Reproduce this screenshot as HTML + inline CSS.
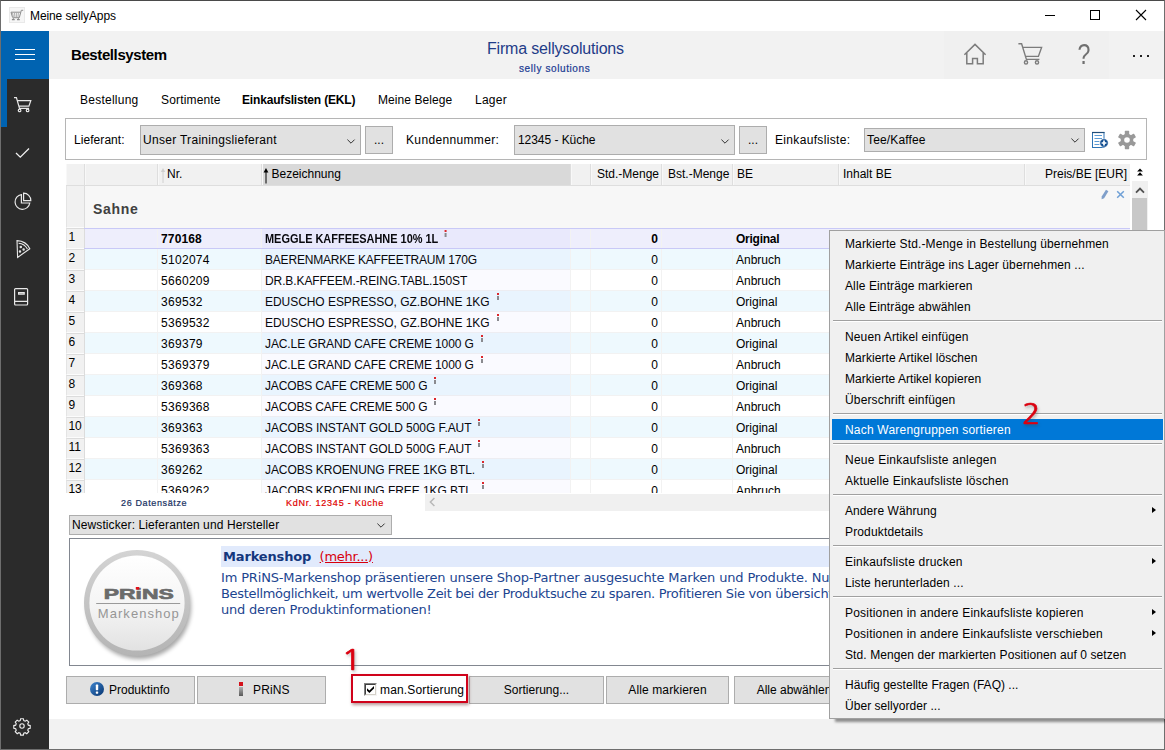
<!DOCTYPE html>
<html lang="de">
<head>
<meta charset="utf-8">
<title>Meine sellyApps</title>
<style>
*{box-sizing:border-box;margin:0;padding:0}
html,body{width:1165px;height:750px;overflow:hidden;background:#fff}
body{position:relative;font-family:"Liberation Sans",Arial,sans-serif;font-size:12px;color:#000}
.abs{position:absolute}
#win{position:absolute;left:0;top:0;width:1165px;height:750px;border:1px solid #6e6e6e;border-top-color:#4a4a4a;overflow:hidden}
/* title bar */
#title{position:absolute;left:1px;top:1px;width:1163px;height:30px;background:#fff}
#title .txt{position:absolute;left:29px;top:8px;font-size:12px;letter-spacing:-0.1px}
/* sidebar */
#side{position:absolute;left:1px;top:31px;width:48px;height:718px;background:#2b2b2b}
#side .top{position:absolute;left:0;top:0;width:48px;height:48px;background:#0063b1}
#side .act{position:absolute;left:0;top:48px;width:6px;height:48px;background:#0063b1}
/* header */
#head{position:absolute;left:49px;top:31px;width:1115px;height:48px;background:#f2f2f2}
#head .t1{position:absolute;left:22px;top:15px;font-size:15px;font-weight:bold;letter-spacing:-0.4px}
#head .firm{position:absolute;left:438px;top:9px;font-size:16px;color:#1f3c88;letter-spacing:-0.18px;white-space:nowrap}
#head .sub{position:absolute;left:470px;top:32px;font-size:10px;color:#1a3a92;-webkit-text-stroke:.2px #1a3a92;letter-spacing:0.6px;white-space:nowrap}
/* tabs */
.tab{position:absolute;top:93px;font-size:12px;white-space:nowrap;letter-spacing:0.25px}
/* filter */
#filter{position:absolute;left:65px;top:118px;width:1082px;height:42px;border:1px solid #b5b5b5;background:#fff}
.combo{position:absolute;background:#e1e1e1;border:1px solid #adadad;font-size:12px;white-space:nowrap}
.combo span{position:absolute;left:2px;letter-spacing:0.3px}
.lbl{position:absolute;font-size:12px;white-space:nowrap;letter-spacing:0.15px}
.btn{position:absolute;background:#e1e1e1;border:1px solid #adadad;font-size:12px;text-align:center;white-space:nowrap}

/* table */
#grid{position:absolute;left:66px;top:164px;width:1082px;height:329px;overflow:hidden;background:#fff}
#ghead{position:absolute;left:0;top:0;width:1064px;height:22px;background:#f1f1f1;border-bottom:1px solid #dedede}
#ghead div{position:absolute;top:0;height:21px;line-height:20px;font-size:12px;white-space:nowrap;border-left:1px solid #dedede;box-shadow:inset 1px 0 0 #f8f8f8;padding-left:6px;letter-spacing:0}
#grp{position:absolute;left:18px;top:22px;width:1046px;height:42px;background:#f7f7f7}
#grp b{position:absolute;left:9px;top:15px;font-size:14px;color:#404040;letter-spacing:0.7px}
.rn{position:absolute;left:0;width:18px;background:#f1f1f1;border-top:1px solid #dcdcdc;border-bottom:1px solid #fcfcfc;border-left:1px solid #e4e4e4;font-size:12px;line-height:17px;padding-left:1.6px;white-space:nowrap;letter-spacing:-0.2px}
.row{position:absolute;left:18px;width:1046px;height:21px;font-size:12px;line-height:23px;white-space:nowrap;border-bottom:1px solid #f2f2f2}
.row.e{background:#eef9fe}
.row.s{background:#eeeefc;border-top:1px solid #c9c9f7;border-bottom:1px solid #c9c9f7;font-weight:bold;line-height:21px}
.row span{position:absolute;top:0}
.row .c1{left:77px;letter-spacing:0.3px}
.row .c2{left:181px;letter-spacing:-0.2px}
.row.s .c2{letter-spacing:0;transform:scaleX(.912);transform-origin:0 50%}
.row.s .c1{letter-spacing:0.15px}
.row .c3{left:505px;width:70px;text-align:right;padding-right:1px}
.row .c4{left:652px;letter-spacing:0}
.row.s .c4{letter-spacing:-0.26px}
.vl{position:absolute;top:21px;width:1px;height:308px;background:#f2f2f2}
#sortcol{position:absolute;left:196px;top:64px;width:308px;height:265px;background:rgba(155,155,255,.05)}
i.pi{display:inline-block;width:2px;height:7px;background:linear-gradient(#e02020 0,#e02020 2px,transparent 2px,transparent 3px,#8a8a8a 3px);vertical-align:top;margin-left:7px;margin-top:2px}
.row.s i.pi{margin-top:1px;transform:scaleX(1.1)}

/* scrollbar */
#vsb{position:absolute;left:1132px;top:181px;width:16px;height:312px;background:#f0f0f0}
#vsb .th{position:absolute;left:0;top:17px;width:15px;height:200px;background:#c8c8c8}
/* status */
#status{position:absolute;left:66px;top:493px;width:1082px;height:18px;background:#fff}
#status .a{position:absolute;left:55px;top:5px;font-size:9px;color:#17305f;-webkit-text-stroke:.2px #17305f;letter-spacing:0.63px;white-space:nowrap}
#status .b{position:absolute;left:220px;top:5px;font-size:9px;color:#e00000;-webkit-text-stroke:.2px #e00000;letter-spacing:0.76px;white-space:nowrap}
#status .hs{position:absolute;left:359px;top:1px;width:723px;height:17px;background:#f0f0f0}
/* news */
#news{position:absolute;left:69px;top:538px;width:1079px;height:128px;border:1px solid #828790;background:#fff;overflow:hidden}
#news .bar{position:absolute;left:151px;top:7px;width:930px;height:21px;background:#e1eafc}
#news .ttl{position:absolute;left:153px;top:10px;font-family:"DejaVu Sans",Verdana,sans-serif;font-size:13px;font-weight:bold;color:#14377d;white-space:nowrap;letter-spacing:-0.15px}
#news .ttl a{font-weight:normal;color:#d8000c;text-decoration:underline;letter-spacing:-0.25px;margin-left:4px}
#news .txt{position:absolute;left:151px;top:31px;width:900px;font-family:"DejaVu Sans",Verdana,sans-serif;font-size:13px;line-height:16px;color:#1c4590;white-space:nowrap;letter-spacing:-0.2px}
#logo{position:absolute;left:16px;top:11px;width:112px;height:112px}
/* bottom */
#strip{position:absolute;left:49px;top:719px;width:1115px;height:30px;background:#f2f2f2}
.btn{height:28px;line-height:26px;top:676px}
/* menu */
#menu{position:absolute;left:829px;top:230px;width:336px;height:489px;background:#f0f0f0;border:1px solid #a0a0a0;box-shadow:5px 4px 2.5px -1px rgba(0,0,0,.42);padding:2px 1px 2px 2px}
#menu .mi{height:21px;line-height:23px;padding-left:13px;font-size:12px;white-space:nowrap;position:relative;letter-spacing:0.13px}
#menu .sep{height:9px;position:relative}
#menu .sep:before{content:"";position:absolute;left:1px;right:1px;top:3px;height:1px;background:#a0a0a0;box-shadow:0 1px 0 #fff}
#menu .hl{background:#0078d7;color:#fff}
#menu .ar:after{content:"";position:absolute;right:7px;top:7px;border-left:4px solid #000;border-top:3.5px solid transparent;border-bottom:3.5px solid transparent}
.red{position:absolute;color:#db0010;font-size:28px;font-family:"NanumGothic","Liberation Sans",sans-serif;-webkit-text-stroke:.6px #db0010;text-shadow:1px 2px 3px rgba(60,60,60,.45);line-height:30px;height:30px}
#rbox{position:absolute;left:351px;top:674px;width:117px;height:29px;border:2px solid #d0021b;box-shadow:1px 2px 3px rgba(80,0,0,.4);pointer-events:none}
</style>
</head>
<body>
<div id="win"></div>
<div id="title"><span class="txt">Meine sellyApps</span></div>
<div id="side"><div class="top"></div><div class="act"></div></div>
<div id="head">
 <div style="position:absolute;left:895px;top:0;width:165px;height:48px;background:#f0f0f0"></div>
 <div class="t1">Bestellsystem</div>
 <div class="firm">Firma sellysolutions</div>
 <div class="sub">selly solutions</div>
</div>
<div class="tab" style="left:80px">Bestellung</div>
<div class="tab" style="left:161px;letter-spacing:0.16px">Sortimente</div>
<div class="tab" style="left:242px;font-weight:bold;letter-spacing:-0.17px">Einkaufslisten (EKL)</div>
<div class="tab" style="left:378px;letter-spacing:0.07px">Meine Belege</div>
<div class="tab" style="left:475px">Lager</div>
<div id="filter"></div>
<div id="grid">
<div id="ghead"><div style="left:0;width:18px;border-left:0"></div><div style="left:18px;width:73px"></div><div style="left:91px;width:104px;padding-left:9px">Nr.</div><div style="left:195px;width:309px;background:#d9d9d9;padding-left:9.5px">Bezeichnung</div><div style="left:504px;width:20px"></div><div style="left:524px;width:71px">Std.-Menge</div><div style="left:595px;width:71px">Bst.-Menge</div><div style="left:666px;width:106px;padding-left:4px">BE</div><div style="left:772px;width:186px;padding-left:4px">Inhalt BE</div><div style="left:958px;width:106px;text-align:right;padding-right:3px">Preis/BE [EUR]</div></div>
<div class="rn" style="top:22px;height:42px;border-top:0"></div>
<div id="grp"><b>Sahne</b></div>
<div class="rn" style="top:64px;height:21px">1</div>
<div class="row s" style="top:64px"><span class="c1">770168</span><span class="c2">MEGGLE KAFFEESAHNE 10% 1L<i class="pi"></i></span><span class="c3">0</span><span class="c4">Original</span></div>
<div class="rn" style="top:85px;height:21px">2</div>
<div class="row e" style="top:85px"><span class="c1">5102074</span><span class="c2">BAERENMARKE KAFFEETRAUM 170G</span><span class="c3">0</span><span class="c4">Anbruch</span></div>
<div class="rn" style="top:106px;height:21px">3</div>
<div class="row" style="top:106px"><span class="c1">5660209</span><span class="c2" style="letter-spacing:-0.1px">DR.B.KAFFEEM.-REING.TABL.150ST</span><span class="c3">0</span><span class="c4">Anbruch</span></div>
<div class="rn" style="top:127px;height:21px">4</div>
<div class="row e" style="top:127px"><span class="c1">369532</span><span class="c2" style="letter-spacing:-0.05px">EDUSCHO ESPRESSO, GZ.BOHNE 1KG<i class="pi"></i></span><span class="c3">0</span><span class="c4">Original</span></div>
<div class="rn" style="top:148px;height:21px">5</div>
<div class="row" style="top:148px"><span class="c1">5369532</span><span class="c2" style="letter-spacing:-0.05px">EDUSCHO ESPRESSO, GZ.BOHNE 1KG<i class="pi"></i></span><span class="c3">0</span><span class="c4">Anbruch</span></div>
<div class="rn" style="top:169px;height:21px">6</div>
<div class="row e" style="top:169px"><span class="c1">369379</span><span class="c2" style="letter-spacing:-0.11px">JAC.LE GRAND CAFE CREME 1000 G<i class="pi"></i></span><span class="c3">0</span><span class="c4">Original</span></div>
<div class="rn" style="top:190px;height:21px">7</div>
<div class="row" style="top:190px"><span class="c1">5369379</span><span class="c2" style="letter-spacing:-0.11px">JAC.LE GRAND CAFE CREME 1000 G<i class="pi"></i></span><span class="c3">0</span><span class="c4">Anbruch</span></div>
<div class="rn" style="top:211px;height:21px">8</div>
<div class="row e" style="top:211px"><span class="c1">369368</span><span class="c2" style="letter-spacing:-0.155px">JACOBS CAFE CREME 500 G<i class="pi"></i></span><span class="c3">0</span><span class="c4">Original</span></div>
<div class="rn" style="top:232px;height:21px">9</div>
<div class="row" style="top:232px"><span class="c1">5369368</span><span class="c2" style="letter-spacing:-0.155px">JACOBS CAFE CREME 500 G<i class="pi"></i></span><span class="c3">0</span><span class="c4">Anbruch</span></div>
<div class="rn" style="top:253px;height:21px">10</div>
<div class="row e" style="top:253px"><span class="c1">369363</span><span class="c2" style="letter-spacing:-0.06px">JACOBS INSTANT GOLD 500G F.AUT<i class="pi"></i></span><span class="c3">0</span><span class="c4">Original</span></div>
<div class="rn" style="top:274px;height:21px">11</div>
<div class="row" style="top:274px"><span class="c1">5369363</span><span class="c2" style="letter-spacing:-0.06px">JACOBS INSTANT GOLD 500G F.AUT<i class="pi"></i></span><span class="c3">0</span><span class="c4">Anbruch</span></div>
<div class="rn" style="top:295px;height:21px">12</div>
<div class="row e" style="top:295px"><span class="c1">369262</span><span class="c2" style="letter-spacing:-0.07px">JACOBS KROENUNG FREE 1KG BTL.<i class="pi"></i></span><span class="c3">0</span><span class="c4">Original</span></div>
<div class="rn" style="top:316px;height:21px">13</div>
<div class="row" style="top:316px"><span class="c1">5369262</span><span class="c2" style="letter-spacing:-0.07px">JACOBS KROENUNG FREE 1KG BTL.<i class="pi"></i></span><span class="c3">0</span><span class="c4">Anbruch</span></div>
<div id="sortcol"></div>
<div style="position:absolute;left:18px;top:22px;width:1px;height:307px;background:#dcdcdc"></div>
<div class="vl" style="left:91px;top:64px"></div>
<div class="vl" style="left:195px;top:64px"></div>
<div class="vl" style="left:504px;top:64px"></div>
<div class="vl" style="left:524px;top:64px"></div>
<div class="vl" style="left:595px;top:64px"></div>
<div class="vl" style="left:666px;top:64px"></div>
<div class="vl" style="left:772px;top:64px"></div>
<div class="vl" style="left:958px;top:64px"></div>
<div style="position:absolute;left:18px;top:64px;width:1046px;height:1px;background:#c9c9f7"></div><div style="position:absolute;left:18px;top:84px;width:1046px;height:1px;background:#c9c9f7"></div>
</div>
<div class="lbl" style="left:74px;top:133px;letter-spacing:0.06px">Lieferant:</div>
<div class="combo" style="left:140px;top:125px;width:221px;height:30px"><span style="top:7px">Unser Trainingslieferant</span></div>
<div class="btn" style="left:365px;top:126px;width:28px;height:28px;line-height:26px">...</div>
<div class="lbl" style="left:406px;top:133px;letter-spacing:0.35px">Kundennummer:</div>
<div class="combo" style="left:514px;top:125px;width:221px;height:30px"><span style="top:7px;left:3px;letter-spacing:-0.05px">12345 - Küche</span></div>
<div class="btn" style="left:739px;top:126px;width:28px;height:28px;line-height:26px">...</div>
<div class="lbl" style="left:775px;top:133px;letter-spacing:0.33px">Einkaufsliste:</div>
<div class="combo" style="left:864px;top:128px;width:221px;height:24px"><span style="top:4px;letter-spacing:0.15px">Tee/Kaffee</span></div>

<div id="vsb"><div class="th"></div></div>
<div id="status"><span class="a">26 Datensätze</span><span class="b">KdNr. 12345 - Küche</span><div class="hs"></div></div>
<div class="combo" style="left:69px;top:515px;width:323px;height:20px"><span style="top:2px;left:2px;letter-spacing:0.1px">Newsticker: Lieferanten und Hersteller</span></div>
<div id="news"><div class="bar"></div>
<div id="logo"><svg width="118" height="118" viewBox="0 0 118 118" style="position:absolute;left:-5px;top:-3px">
<defs>
<linearGradient id="lg1" x1="0" y1="0" x2="0" y2="1"><stop offset="0" stop-color="#d4d4d4"/><stop offset="1" stop-color="#b4b4b4"/></linearGradient>
<linearGradient id="lg2" x1="0" y1="0" x2="0" y2="1"><stop offset="0" stop-color="#ffffff"/><stop offset=".55" stop-color="#f4f4f4"/><stop offset="1" stop-color="#e2e2e2"/></linearGradient>
<filter id="lf" x="-20%" y="-20%" width="140%" height="140%"><feGaussianBlur stdDeviation="2"/></filter>
</defs>
<circle cx="58" cy="60" r="52" fill="#000" opacity=".35" filter="url(#lf)"/>
<circle cx="56" cy="56" r="53" fill="url(#lg1)"/>
<circle cx="56" cy="56" r="47.6" fill="url(#lg2)"/>
<text x="22.8" y="51.5" font-family="'Liberation Sans',sans-serif" font-weight="bold" font-size="15.5" fill="#6b6b6b" stroke="#6b6b6b" stroke-width=".7" textLength="70" lengthAdjust="spacingAndGlyphs">PRiNS</text>
<rect x="54.8" y="40" width="3.4" height="2.6" fill="#e0101a"/>
<path d="M15.2 56.5h84" stroke="#9a9a9a" stroke-width="1"/>
<text x="16.8" y="71" font-family="'Liberation Sans',sans-serif" font-size="13" fill="#969696" textLength="81" lengthAdjust="spacing">Markenshop</text>
</svg></div>
<div class="ttl">Markenshop <a>(mehr...)</a></div>
<div class="txt"><span style="letter-spacing:-0.16px">Im PRiNS-Markenshop präsentieren unsere Shop-Partner ausgesuchte Marken und Produkte. Nutzen Sie die</span><br><span style="letter-spacing:-0.32px">Bestellmöglichkeit, um wertvolle Zeit bei der Produktsuche zu sparen. Profitieren Sie von übersichtlichen Listen</span><br>und deren Produktinformationen!</div>
</div>
<div class="btn" style="left:66px;width:129px;text-align:left;padding-left:42px">Produktinfo</div>
<div class="btn" style="left:197px;width:129px;text-align:left;padding-left:55px;letter-spacing:0.15px">PRiNS</div>
<div class="lbl" style="left:380px;top:683px">man.Sortierung</div>
<div class="btn" style="left:469px;width:135px">Sortierung...</div>
<div class="btn" style="left:606px;width:123px;letter-spacing:0.12px">Alle markieren</div>
<div class="btn" style="left:734px;width:120px">Alle abwählen</div>
<div id="strip"></div>

<div id="menu">
<div class="mi" style="letter-spacing:0.128px">Markierte Std.-Menge in Bestellung übernehmen</div>
<div class="mi" style="letter-spacing:0.112px">Markierte Einträge ins Lager übernehmen ...</div>
<div class="mi" style="letter-spacing:0.121px">Alle Einträge markieren</div>
<div class="mi" style="letter-spacing:0.136px">Alle Einträge abwählen</div>
<div class="sep"></div>
<div class="mi" style="letter-spacing:0.13px">Neuen Artikel einfügen</div>
<div class="mi" style="letter-spacing:0.074px">Markierte Artikel löschen</div>
<div class="mi" style="letter-spacing:0.028px">Markierte Artikel kopieren</div>
<div class="mi" style="letter-spacing:0.153px">Überschrift einfügen</div>
<div class="sep"></div>
<div class="mi hl" style="letter-spacing:0.203px">Nach Warengruppen sortieren</div>
<div class="sep"></div>
<div class="mi" style="letter-spacing:0.239px">Neue Einkaufsliste anlegen</div>
<div class="mi" style="letter-spacing:0.186px">Aktuelle Einkaufsliste löschen</div>
<div class="sep"></div>
<div class="mi ar" style="letter-spacing:0.075px">Andere Währung</div>
<div class="mi" style="letter-spacing:0.15px">Produktdetails</div>
<div class="sep"></div>
<div class="mi ar" style="letter-spacing:0.205px">Einkaufsliste drucken</div>
<div class="mi" style="letter-spacing:0.11px">Liste herunterladen ...</div>
<div class="sep"></div>
<div class="mi ar" style="letter-spacing:0.212px">Positionen in andere Einkaufsliste kopieren</div>
<div class="mi ar" style="letter-spacing:0.212px">Positionen in andere Einkaufsliste verschieben</div>
<div class="mi" style="letter-spacing:0.091px">Std. Mengen der markierten Positionen auf 0 setzen</div>
<div class="sep"></div>
<div class="mi" style="letter-spacing:0.021px">Häufig gestellte Fragen (FAQ) ...</div>
<div class="mi" style="letter-spacing:0.044px">Über sellyorder ...</div>
</div>

<!-- icons -->
<svg class="abs" style="left:9px;top:7px" width="16" height="16" viewBox="0 0 16 16"><rect x=".5" y=".5" width="15" height="15" fill="#f6f6f6" stroke="#e9e9e9"/><path d="M14.2 3.3h-1.9l-2 7.4H4.2M2 5.2h9.4M3.6 10.6L2 5.2" fill="none" stroke="#8c8c8c" stroke-width="1"/><path d="M3.4 5.4l1 4.6M5.4 5.4l.5 4.6M7.4 5.4v4.6M9.4 5.4l-.4 4.6" fill="none" stroke="#a8a8a8" stroke-width=".9"/><path d="M2.9 12.6h2.8M8 12.6h2.8" stroke="#8c8c8c" stroke-width="1.3"/><path d="M4.3 10.8v2M9.4 10.8v2" stroke="#8c8c8c" stroke-width=".9"/></svg>
<svg class="abs" style="left:1040px;top:5px" width="115" height="22" viewBox="0 0 115 22" shape-rendering="crispEdges"><path d="M5 10.5h10M50.5 5.5h9v9h-9z" fill="none" stroke="#000" stroke-width="1"/><path d="M96 5l10 10M106 5l-10 10" fill="none" stroke="#000" stroke-width="1.1" shape-rendering="auto"/></svg>
<!-- hamburger -->
<div class="abs" style="left:15px;top:49px;width:20px;height:1px;background:#fff"></div>
<div class="abs" style="left:15px;top:54px;width:20px;height:1px;background:#fff"></div>
<div class="abs" style="left:15px;top:59px;width:20px;height:1px;background:#fff"></div>
<!-- sidebar cart -->
<svg class="abs" style="left:12px;top:94px" width="22" height="20" viewBox="0 0 22 20" fill="none" stroke="#e8e8e8" stroke-width="1.2"><path d="M2 3.6h2.4l3.1 10.8h9.6M5.2 6.6h13.6l-1.9 5.6h-10"/><circle cx="7.6" cy="16.4" r="1.3"/><circle cx="15.6" cy="16.4" r="1.3"/></svg>
<!-- check -->
<svg class="abs" style="left:13px;top:145px" width="20" height="16" viewBox="0 0 20 16" fill="none" stroke="#f0f0f0" stroke-width="1.3"><path d="M3 8l4.3 4.2L16 3.5"/></svg>
<!-- pie -->
<svg class="abs" style="left:12px;top:190px" width="22" height="22" viewBox="0 0 22 22" fill="none" stroke="#e8e8e8" stroke-width="1.2"><path d="M9.4 4.6a7.4 7.4 0 1 0 8.4 8.4h-8.4z"/><path d="M11.6 3.2v7.4h7.2a7.3 7.3 0 0 0-7.2-7.4z"/></svg>
<!-- pizza -->
<svg class="abs" style="left:14px;top:238px" width="18" height="22" viewBox="0 0 18 22" fill="none" stroke="#e8e8e8" stroke-width="1.1"><path d="M3 2.6c5.6.2 10.6 3.4 12.8 8.2L3.6 19.4z"/><path d="M4.6 5.2c4 .4 7.2 2.6 8.8 5.8"/><circle cx="6.8" cy="9" r=".7"/><circle cx="9.6" cy="11.6" r=".7"/><circle cx="6" cy="13.6" r=".7"/></svg>
<!-- book -->
<svg class="abs" style="left:12px;top:286px" width="20" height="22" viewBox="0 0 20 22" fill="none" stroke="#e8e8e8" stroke-width="1.2"><rect x="2.6" y="2.6" width="13" height="16.4" rx="1"/><path d="M2.6 15.4h13M6.6 6.6h5.6v1.6h-5.6z"/></svg>
<!-- side gear -->
<svg class="abs" style="left:11.4px;top:715.3px" width="22" height="22" viewBox="-13 -13 26 26" fill="none" stroke="#ececec" stroke-width="1.35"><circle r="2.6"/><path id="sg" d="M-1.6-8.6h3.2l.5 2.2 1.7.7 1.9-1.2 2.3 2.3-1.2 1.9.7 1.7 2.2.5v3.2l-2.2.5-.7 1.7 1.2 1.9-2.3 2.3-1.9-1.2-1.7.7-.5 2.2h-3.2l-.5-2.2-1.7-.7-1.9 1.2-2.3-2.3 1.2-1.9-.7-1.7-2.2-.5v-3.2l2.2-.5.7-1.7-1.2-1.9 2.3-2.3 1.9 1.2 1.7-.7z"/></svg>
<!-- header icons -->
<svg class="abs" style="left:962px;top:42px" width="26" height="24" viewBox="0 0 26 24" fill="none" stroke="#7c7c7c" stroke-width="1.5"><path d="M2.4 12.8L13 2.4l10.6 10.4"/><path d="M4.8 11v10.8h5.8v-5.4h4.8v5.4h5.8V11"/></svg>
<svg class="abs" style="left:1016px;top:41px" width="28" height="25" viewBox="0 0 28 25" fill="none" stroke="#7c7c7c" stroke-width="1.4"><path d="M2.4 2.8h3.2l4.8 15.6h13M6.2 6.4h19.4l-3.2 9h-13"/><circle cx="10" cy="21.4" r="1.6"/><circle cx="21" cy="21.4" r="1.6"/></svg>
<div class="abs" style="left:1074px;top:39px;width:20px;font-size:29px;line-height:30px;color:#707070;text-align:center;font-weight:normal;transform:scaleX(.8)">?</div>
<div class="abs" style="left:1133px;top:55px;width:2px;height:2px;background:#222"></div>
<div class="abs" style="left:1140px;top:55px;width:2px;height:2px;background:#222"></div>
<div class="abs" style="left:1147px;top:55px;width:2px;height:2px;background:#222"></div>
<!-- combo chevrons -->
<svg class="abs chev" style="left:346px;top:138px" width="10" height="7" viewBox="0 0 10 7" fill="none" stroke="#333" stroke-width="1"><path d="M1.4 1.6l3.6 3.6 3.6-3.6"/></svg>
<svg class="abs chev" style="left:720px;top:138px" width="10" height="7" viewBox="0 0 10 7" fill="none" stroke="#333" stroke-width="1"><path d="M1.4 1.6l3.6 3.6 3.6-3.6"/></svg>
<svg class="abs chev" style="left:1070px;top:137px" width="10" height="7" viewBox="0 0 10 7" fill="none" stroke="#333" stroke-width="1"><path d="M1.4 1.6l3.6 3.6 3.6-3.6"/></svg>
<svg class="abs chev" style="left:376px;top:522px" width="10" height="7" viewBox="0 0 10 7" fill="none" stroke="#333" stroke-width="1"><path d="M1.4 1.6l3.6 3.6 3.6-3.6"/></svg>
<!-- list-plus -->
<svg class="abs" style="left:1091px;top:131px" width="19" height="18" viewBox="0 0 19 18"><rect x="1.5" y="1.5" width="11.5" height="15" fill="#fff" stroke="#2e75b6"/><path d="M1 1.5h12.5" stroke="#1f4e79" stroke-width="1.2"/><path d="M3.5 4.5h7.5M3.5 7.5h7.5M3.5 10.5h5M3.5 13.5h5" stroke="#5b9bd5" stroke-width="1.2"/><circle cx="13" cy="12" r="4.2" fill="#0f4c8f" stroke="#fff" stroke-width=".6"/><path d="M10.6 12h4.8M13 9.6v4.8" stroke="#fff" stroke-width="1.7"/></svg>
<!-- gear gray -->
<svg class="abs" style="left:1117px;top:130px" width="20" height="20" viewBox="-10 -10 20 20"><g fill="#999"><circle r="6.3"/><rect x="-2.2" y="-9.2" width="4.4" height="18.4" rx=".6"/><rect x="-2.2" y="-9.2" width="4.4" height="18.4" rx=".6" transform="rotate(60)"/><rect x="-2.2" y="-9.2" width="4.4" height="18.4" rx=".6" transform="rotate(120)"/></g><circle r="2.8" fill="#fff"/></svg>
<!-- header sort icons -->
<svg class="abs" style="left:160px;top:167px" width="6" height="17" viewBox="0 0 6 17"><path d="M3 1L.8 5h4.4z" fill="#d0d0d0"/><path d="M3 4v12" stroke="#d0d0d0" stroke-width="1"/></svg>
<svg class="abs" style="left:263px;top:167px" width="6" height="17" viewBox="0 0 6 17"><path d="M3 1L.6 5.4h4.8z" fill="#000"/><path d="M3 4v12.5" stroke="#000" stroke-width="1"/></svg>
<svg class="abs" style="left:1136px;top:167.5px" width="8" height="8" viewBox="0 0 8 8"><path d="M4 .4L1.1 3.6h5.8zM4 4.2L1.1 7.4h5.8z" fill="#000"/></svg>
<!-- scrollbar arrow -->
<svg class="abs" style="left:1135px;top:187px" width="10" height="7" viewBox="0 0 10 7" fill="none" stroke="#505050" stroke-width="1.8"><path d="M1 5.6l4-4 4 4"/></svg>
<!-- group icons -->
<svg class="abs" style="left:1100px;top:189px" width="10" height="11" viewBox="0 0 10 11"><path d="M6 .8l2.4 1.5-4.3 6.9-2.5 1.1.1-2.7z" fill="#7f9fca"/></svg>
<svg class="abs" style="left:1116px;top:190px" width="9" height="9" viewBox="0 0 9 9" fill="none" stroke="#6fa0d6" stroke-width="1.5"><path d="M1.2 1.2l6.6 6.6M7.8 1.2L1.2 7.8"/></svg>
<!-- hscroll arrow -->
<svg class="abs" style="left:429px;top:497px" width="7" height="10" viewBox="0 0 7 10" fill="none" stroke="#b8b8b8" stroke-width="1.5"><path d="M5.4 1L1.4 5l4 4"/></svg>
<!-- produktinfo icon -->
<svg class="abs" style="left:90px;top:682px" width="14" height="14" viewBox="0 0 14 14"><defs><linearGradient id="pg" x1="0" y1="0" x2="1" y2="1"><stop offset="0" stop-color="#3f86d0"/><stop offset="1" stop-color="#06336f"/></linearGradient></defs><circle cx="7" cy="7" r="7" fill="url(#pg)"/><rect x="5.8" y="2.6" width="2.4" height="5.6" rx=".6" fill="#fff"/><rect x="5.8" y="9.4" width="2.4" height="2.3" rx=".6" fill="#fff"/></svg>
<!-- prins icon -->
<div class="abs" style="left:239px;top:682px;width:4px;height:4px;background:#d4111b"></div>
<div class="abs" style="left:239px;top:687px;width:4px;height:9px;background:linear-gradient(#b0b0b0,#595959)"></div>
<!-- checkbox -->
<div class="abs" style="left:364px;top:683px;width:13px;height:13px;background:#fff;border:1px solid;border-color:#808080 #f4f4f4 #f4f4f4 #808080"><div style="position:absolute;left:0;top:0;width:11px;height:11px;border:1px solid;border-color:#404040 #d4d0c8 #d4d0c8 #404040"></div><svg style="position:absolute;left:2px;top:2px" width="7" height="7" viewBox="0 0 7 7"><path d="M0 2.2v2.6l2.4 2.2L7 2.6V0L2.4 4.4z" fill="#000"/></svg></div>
<div id="rbox"></div><div class="red" style="left:340.6px;top:644.6px;transform:scaleX(1.25);transform-origin:0 0">1</div><div class="red" style="left:1022px;top:399px;transform:scaleX(1.08);transform-origin:0 0">2</div>
</body>
</html>
